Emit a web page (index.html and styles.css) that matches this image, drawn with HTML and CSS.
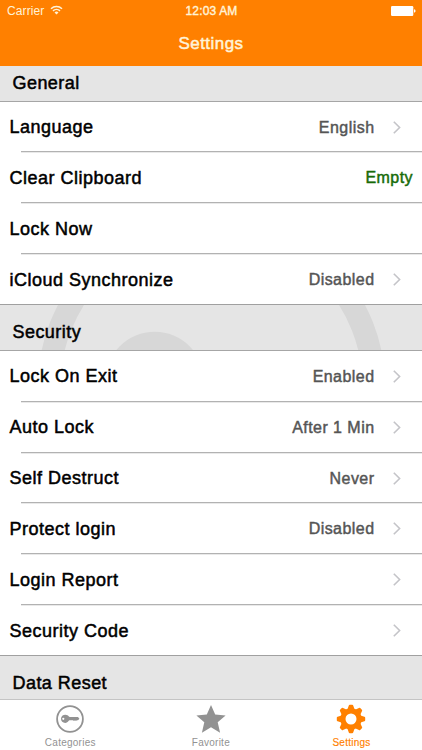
FILE: index.html
```html
<!DOCTYPE html>
<html lang="en">
<head>
<meta charset="utf-8">
<title>Settings</title>
<link rel="stylesheet" href="styles.css">
</head>
<body>
<div class="screen">
  <header class="navbar">
    <div class="status">
      <div class="carrier"><span>Carrier</span>
        <svg class="wifi" width="13" height="10" viewBox="0 0 13 10" fill="none" stroke="#fff3d8" stroke-width="1.5"><path d="M1 3.7a7.8 7.8 0 0 1 11 0M3 5.9a5 5 0 0 1 7 0"/><path d="M4.5 7.5a2.9 2.9 0 0 1 4 0l-2 2z" fill="#fff3d8" stroke="none"/></svg>
      </div>
      <div class="clock">12:03 AM</div>
      <svg class="battery" width="25" height="10" viewBox="0 0 25 10" fill="#fff"><rect width="22.3" height="10" rx="1.2"/><path d="M23 3.3q1.6.3 1.6 1.7T23 6.7z"/></svg>
    </div>
    <h1 class="title">Settings</h1>
  </header>
  <main class="list">
    <h2 class="section first"><span>General</span></h2>
    <div class="row"><span class="label">Language</span><span class="value">English</span><svg class="chevron" viewBox="0 0 8 13"><path d="M.8.8 6.6 6.5.8 12.2"/></svg></div>
    <div class="row"><span class="label">Clear Clipboard</span><span class="value empty">Empty</span></div>
    <div class="row"><span class="label">Lock Now</span></div>
    <div class="row last"><span class="label">iCloud Synchronize</span><span class="value">Disabled</span><svg class="chevron" viewBox="0 0 8 13"><path d="M.8.8 6.6 6.5.8 12.2"/></svg></div>
    <h2 class="section">
      <svg class="watermark" width="422" height="45" viewBox="0 305 422 45"><circle cx="211.5" cy="386" r="162.3" fill="none" stroke="#d7d7d7" stroke-width="22.5"/><circle cx="154.7" cy="381" r="49.3" fill="#d7d7d7"/></svg>
      <span>Security</span>
    </h2>
    <div class="row"><span class="label">Lock On Exit</span><span class="value">Enabled</span><svg class="chevron" viewBox="0 0 8 13"><path d="M.8.8 6.6 6.5.8 12.2"/></svg></div>
    <div class="row"><span class="label">Auto Lock</span><span class="value">After 1 Min</span><svg class="chevron" viewBox="0 0 8 13"><path d="M.8.8 6.6 6.5.8 12.2"/></svg></div>
    <div class="row"><span class="label">Self Destruct</span><span class="value">Never</span><svg class="chevron" viewBox="0 0 8 13"><path d="M.8.8 6.6 6.5.8 12.2"/></svg></div>
    <div class="row"><span class="label">Protect login</span><span class="value">Disabled</span><svg class="chevron" viewBox="0 0 8 13"><path d="M.8.8 6.6 6.5.8 12.2"/></svg></div>
    <div class="row"><span class="label">Login Report</span><svg class="chevron" viewBox="0 0 8 13"><path d="M.8.8 6.6 6.5.8 12.2"/></svg></div>
    <div class="row last"><span class="label">Security Code</span><svg class="chevron" viewBox="0 0 8 13"><path d="M.8.8 6.6 6.5.8 12.2"/></svg></div>
    <h2 class="section"><span>Data Reset</span></h2>
  </main>
  <nav class="tabs">
    <div class="tab">
      <svg width="30" height="30" viewBox="-15 -15 30 30" fill="#929292"><circle r="12.9" fill="none" stroke="#929292" stroke-width="1.8"/><path fill-rule="evenodd" d="M-9-.2c0-2.500 1.900-4.100 4.400-4.100 1.600 0 2.800.7 3.500 1.900l.8.500H8L9.400-.2 8 1.300H6.800L6 2 5 1.300 4 2 3 1.300H-.7l-.8.8C-2.200 3.200-3.300 3.900-4.800 3.900-7.200 3.900-9 2.300-9-.2zm1.200 0a1.100 1.100 0 1 0 2.200 0 1.100 1.100 0 1 0-2.200 0z"/></svg>
      <span>Categories</span>
    </div>
    <div class="tab">
      <svg width="30" height="30" viewBox="-15 -15 30 30" fill="#929292"><path d="M0-14 4.200-4.500 14.600-3.600 6.700 3.200 9.100 13.700 0 8.200-9.100 13.700-6.700 3.200-14.600-3.600-4.200-4.500z"/></svg>
      <span>Favorite</span>
    </div>
    <div class="tab active">
      <svg width="30" height="30" viewBox="-15 -15 30 30" fill="#ff8000">
        <defs><path id="tooth" d="M-3.600-9.500-2.200-13.400Q-2-14.200-1.200-14.200H1.200Q2-14.200 2.200-13.400L3.600-9.500z"/></defs>
        <circle r="8.100" fill="none" stroke="#ff8000" stroke-width="5.200"/>
        <use href="#tooth"/><use href="#tooth" transform="rotate(45)"/><use href="#tooth" transform="rotate(90)"/><use href="#tooth" transform="rotate(135)"/><use href="#tooth" transform="rotate(180)"/><use href="#tooth" transform="rotate(225)"/><use href="#tooth" transform="rotate(270)"/><use href="#tooth" transform="rotate(315)"/>
      </svg>
      <span>Settings</span>
    </div>
  </nav>
</div>
</body>
</html>
```
FILE: styles.css
```css
* { box-sizing: border-box; }
body { margin: 0; font-family: "Liberation Sans", Arial, sans-serif; }
.screen { width: 422px; height: 750px; overflow: hidden; display: flex; flex-direction: column; background: #fff; }

.navbar { flex: none; height: 65.5px; background: #ff8000; color: #fff3d8; }
.status { display: grid; grid-template-columns: 1fr auto 1fr; align-items: center; height: 22px; padding: 0 6px 0 7px; font-size: 12px; }
.carrier { display: flex; align-items: center; gap: 6px; letter-spacing: .1px; }
.wifi { margin-top: -2px; }
.clock { letter-spacing: .15px; -webkit-text-stroke: .4px; }
.battery { justify-self: end; margin-top: -1px; }
.title { margin: 9px 0 0; text-align: center; font-size: 17px; line-height: 25px; font-weight: 400; letter-spacing: .45px; -webkit-text-stroke: .5px; }

.list { flex: 1; min-height: 0; overflow: hidden; color: #000; }
.section { position: relative; display: flex; align-items: flex-end; height: 46px; margin: 0; padding: 0 12.5px 5.500px; background: #e5e5e5; border-bottom: 1px solid #a6a6a6; font-size: 18px; line-height: 24px; font-weight: 400; letter-spacing: .45px; -webkit-text-stroke: .5px; }
.section.first { height: 36px; padding-bottom: 6px; }
.section span { position: relative; }
.watermark { position: absolute; left: 0; top: 0; }
.row { position: relative; display: flex; align-items: center; height: 50.850px; padding: 1.200px 9px 0 9.500px; }
.row::after { content: ""; position: absolute; left: 21px; right: 0; bottom: 0; height: 1px; background: #b2b2b2; box-shadow: 0 1px #e9e9e9; }
.row.last::after { left: 0; background: #a0a0a0; box-shadow: none; }
.label { flex: 1; font-size: 18px; letter-spacing: .5px; -webkit-text-stroke: .5px; }
.value { font-size: 16px; letter-spacing: .45px; color: #555; -webkit-text-stroke: .45px; }
.value.empty { color: #176b08; }
.chevron { flex: none; width: 8px; height: 13px; margin: -1px 12px 0 18.500px; fill: none; stroke: #c4c4c8; stroke-width: 1.6; }

.tabs { flex: none; display: grid; grid-template-columns: repeat(3, 140.600px); height: 51px; border-top: 1px solid #c4c4c4; background: #fff; color: #929292; }
.tab { display: flex; flex-direction: column; align-items: center; padding-top: 4px; font-size: 10px; line-height: 12px; letter-spacing: .25px; }
.tab span { margin-top: 3px; }
.tab.active { color: #ff8000; -webkit-text-stroke: .15px; }
```
